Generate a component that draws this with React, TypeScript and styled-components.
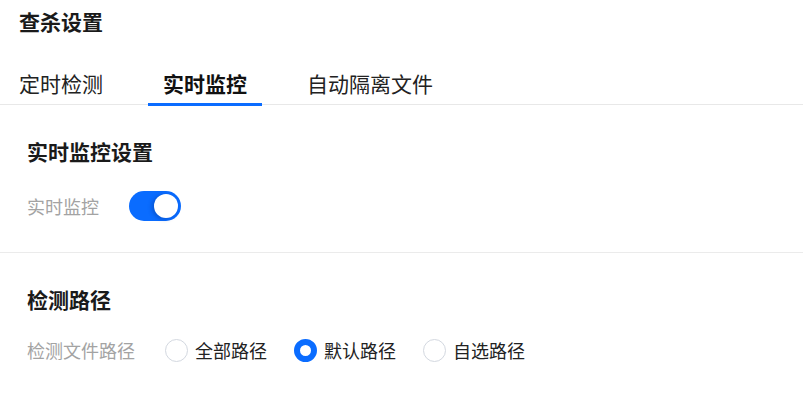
import React, { FC, useState } from 'react'
import styled, { createGlobalStyle } from 'styled-components'

const GlobalStyle = createGlobalStyle`
	body {
		margin: 0;
		background: #ffffff;
		font-family: "Noto Sans CJK SC", "Noto Sans", sans-serif;
		color: #222222;
	}
`

const Page = styled.div`
	width: 803px;
	min-height: 413px;
	background: #ffffff;
`

const PageTitle = styled.h1`
	margin: 0;
	padding: 6px 19px 0;
	font-size: 21px;
	line-height: 30px;
	font-weight: bold;
	color: #1a1a1a;
`

const TabBar = styled.div`
	display: flex;
	gap: 30px;
	margin-top: 32px;
	padding-left: 4px;
	border-bottom: 1px solid #e8e8e8;
`

const Tab = styled.div<{ $active?: boolean }>`
	position: relative;
	padding: 0 15px 6px;
	font-size: 21px;
	line-height: 30px;
	font-weight: ${(p) => (p.$active ? 'bold' : 'normal')};
	color: ${(p) => (p.$active ? '#111111' : '#222222')};
	cursor: pointer;

	&::after {
		content: '';
		display: ${(p) => (p.$active ? 'block' : 'none')};
		position: absolute;
		left: 0;
		right: 0;
		bottom: -2px;
		height: 3px;
		background: #0a6cff;
	}
`

const Section = styled.section<{ $divider?: boolean }>`
	padding: 31px 27px 31px;
	border-bottom: ${(p) => (p.$divider ? '1px solid #ebebeb' : 'none')};
`

const SectionTitle = styled.h2`
	margin: 0;
	font-size: 21px;
	line-height: 30px;
	font-weight: bold;
	color: #1a1a1a;
`

const Row = styled.div<{ $top: number }>`
	display: flex;
	align-items: center;
	min-height: 30px;
	margin-top: ${(p) => p.$top}px;
`

const Label = styled.span`
	margin-right: 30px;
	font-size: 18px;
	line-height: 30px;
	color: #a3a3a3;
`

const Switch = styled.button<{ $on: boolean }>`
	position: relative;
	width: 52px;
	height: 30px;
	padding: 0;
	border: none;
	border-radius: 15px;
	background: ${(p) => (p.$on ? '#0a6cff' : '#d4d8de')};
	cursor: pointer;
`

const Knob = styled.span<{ $on: boolean }>`
	position: absolute;
	top: 3px;
	left: ${(p) => (p.$on ? '25px' : '3px')};
	width: 24px;
	height: 24px;
	border-radius: 50%;
	background: #ffffff;
	box-shadow: -2px 1px 4px rgba(0, 40, 120, 0.35);
`

const RadioGroup = styled.div`
	display: flex;
	align-items: center;
	gap: 27px;
`

const RadioItem = styled.label`
	display: flex;
	align-items: center;
	gap: 7px;
	font-size: 18px;
	line-height: 30px;
	color: #222222;
	cursor: pointer;
`

const RadioCircle = styled.span<{ $checked: boolean }>`
	box-sizing: border-box;
	width: 23px;
	height: 23px;
	border-radius: 50%;
	background: #ffffff;
	border: ${(p) => (p.$checked ? '6px solid #0a6cff' : '1px solid #d3d8e0')};
`

const tabs = ['定时检测', '实时监控', '自动隔离文件']
const paths = ['全部路径', '默认路径', '自选路径']

const App: FC = () => {
	const [activeTab, setActiveTab] = useState(1)
	const [monitorOn, setMonitorOn] = useState(true)
	const [path, setPath] = useState(1)

	return (
		<Page>
			<GlobalStyle />
			<PageTitle>查杀设置</PageTitle>
			<TabBar>
				{tabs.map((name, i) => (
					<Tab key={name} $active={i === activeTab} onClick={() => setActiveTab(i)}>
						{name}
					</Tab>
				))}
			</TabBar>

			<Section $divider>
				<SectionTitle>实时监控设置</SectionTitle>
				<Row $top={25}>
					<Label>实时监控</Label>
					<Switch $on={monitorOn} onClick={() => setMonitorOn(!monitorOn)}>
						<Knob $on={monitorOn} />
					</Switch>
				</Row>
			</Section>

			<Section>
				<SectionTitle>检测路径</SectionTitle>
				<Row $top={21}>
					<Label>检测文件路径</Label>
					<RadioGroup>
						{paths.map((name, i) => (
							<RadioItem key={name} onClick={() => setPath(i)}>
								<RadioCircle $checked={i === path} />
								{name}
							</RadioItem>
						))}
					</RadioGroup>
				</Row>
			</Section>
		</Page>
	)
}

export default App
